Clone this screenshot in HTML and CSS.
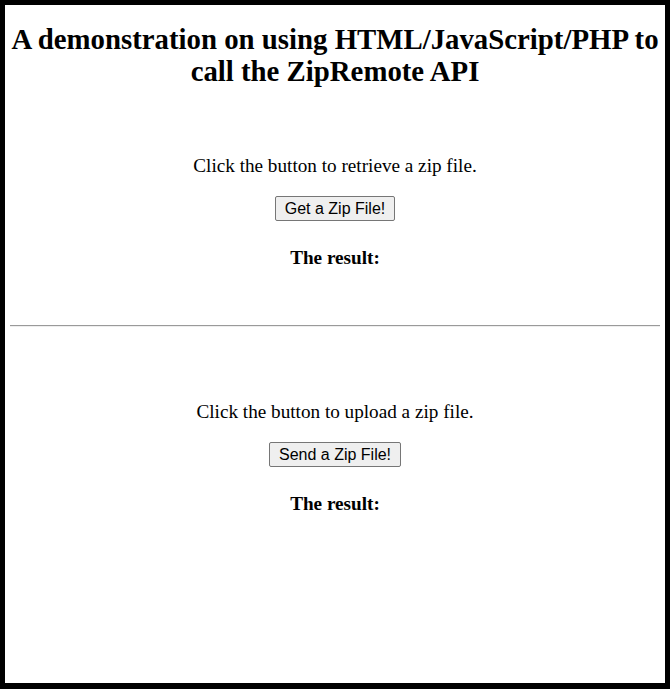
FILE: index.html
```html
<!DOCTYPE html>
<html>
<head>
<meta charset="utf-8">
<link rel="stylesheet" href="styles.css">
</head>
<body>
<div class="frame">
  <h2 class="title">A demonstration on using HTML/JavaScript/PHP to call the ZipRemote API</h2>
  <section class="block">
    <p class="prompt">Click the button to retrieve a zip file.</p>
    <button class="btn" type="button">Get a Zip File!</button>
    <h4 class="result">The result:</h4>
  </section>
  <hr class="divider">
  <section class="block">
    <p class="prompt">Click the button to upload a zip file.</p>
    <button class="btn" type="button">Send a Zip File!</button>
    <h4 class="result">The result:</h4>
  </section>
</div>
</body>
</html>
```

FILE: styles.css
```css
html, body {
  margin: 0;
  padding: 0;
  background: #fff;
}
.frame {
  box-sizing: border-box;
  width: 670px;
  height: 689px;
  border: 5px solid #000;
  border-bottom-width: 6px;
  padding: 0 5px;
  font-family: "Liberation Serif", "Times New Roman", serif;
  color: #000;
  text-align: center;
  overflow: hidden;
}
.title {
  font-size: 28.8px;
  font-weight: bold;
  line-height: 32px;
  margin: 18px 0 0;
}
.block {
  padding-top: 68px;
  display: flex;
  flex-direction: column;
  align-items: center;
}
.prompt {
  font-size: 19.2px;
  line-height: 22px;
  margin: 0;
}
.btn {
  box-sizing: border-box;
  height: 25px;
  margin-top: 19px;
  font-family: "Liberation Sans", Arial, sans-serif;
  font-size: 16px;
  line-height: 18px;
  padding: 2px 8.5px;
  background: #efefef;
  border: 1px solid #767676;
  border-radius: 2px;
  color: #000;
}
.result {
  font-size: 19.2px;
  font-weight: bold;
  line-height: 22px;
  margin: 26px 0 0;
}
.divider {
  margin: 56px 0 0;
  border: 0;
  border-top: 1px solid #9a9a9a;
  border-bottom: 1px solid #eee;
  height: 0;
}
.divider + .block {
  padding-top: 74px;
}
```
